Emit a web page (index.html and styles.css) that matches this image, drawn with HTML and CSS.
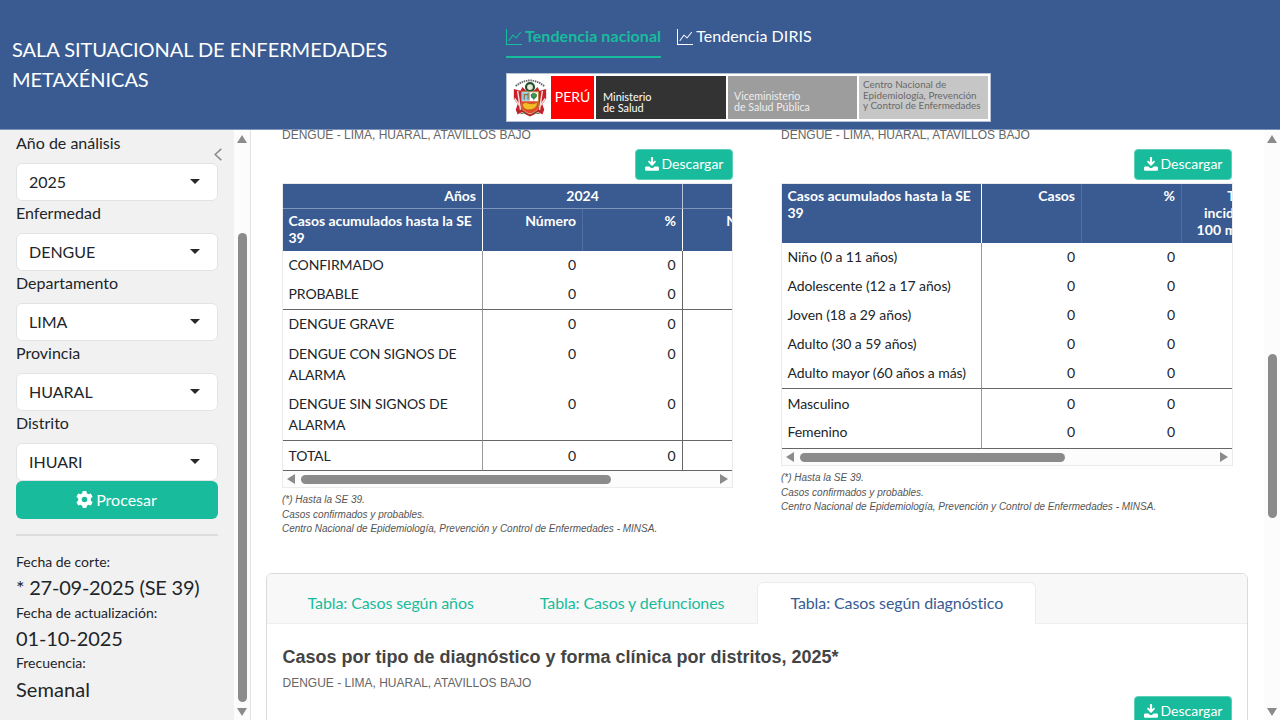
FILE: index.html
```html
<!DOCTYPE html>
<html lang="es">
<head>
<meta charset="utf-8">
<title>Sala situacional de enfermedades metaxénicas</title>
<link rel="stylesheet" href="styles.css">
</head>
<body>
<svg class="defs" width="0" height="0">
  <symbol id="graph" viewBox="0 0 16 16"><path fill-rule="evenodd" d="M0 0h1v15h15v1H0V0Zm14.817 3.113a.5.5 0 0 1 .07.704l-4.500 5.500a.5.5 0 0 1-.74.037L7.060 6.767l-3.656 5.027a.5.5 0 0 1-.808-.588l4-5.500a.5.5 0 0 1 .758-.06l2.609 2.610 4.150-5.073a.5.5 0 0 1 .704-.07Z"/></symbol>
  <symbol id="download" viewBox="0 0 512 512"><path d="M296 30c0-16-12-30-40-30s-40 14-40 30V190l-46-40c-14-12-34-12-46 0s-12 34 0 46l109 112c12 12 34 12 46 0l109-112c12-12 12-34 0-46s-32-12-46 0l-46 40V30zM50 350c-28 0-50 22-50 50v55c0 28 22 50 50 50H462c28 0 50-22 50-50v-55c0-28-22-50-50-50H352l-50 42c-25 22-67 22-92 0L160 350H50z"/></symbol>
</svg>
<header class="topbar">
  <h1 class="title">SALA SITUACIONAL DE ENFERMEDADES METAXÉNICAS</h1>
  <div class="topbar-right">
    <nav class="nav">
      <a class="nav-link active"><svg class="nav-icon"><use href="#graph"/></svg><span>Tendencia nacional</span></a>
      <a class="nav-link"><svg class="nav-icon"><use href="#graph"/></svg><span>Tendencia DIRIS</span></a>
    </nav>
    <div class="logo">
      <svg class="crest" viewBox="0 0 40 42">
        <path d="M5 9Q20-3 35 9" fill="none" stroke="#666" stroke-width="2" stroke-dasharray="1.600 .8"/>
        <path d="M3 12l7 2 2-4 5 5v22l-5-1-5 3-2-5 2-6-4-6z" fill="#c91f2c"/>
        <path d="M37 12l-7 2-2-4-5 5v22l5-1 5 3 2-5-2-6 4-6z" fill="#c91f2c"/>
        <path d="M7 14l3 20M33 14l-3 20M4 22l6 9M36 22l-6 9" stroke="#f3dfd8" stroke-width="1.500"/>
        <circle cx="20" cy="10" r="4.200" fill="#e6ecd9" stroke="#23502f" stroke-width="2.300"/>
        <path d="M11 15h18v14q0 8-9 10-9-2-9-10z" fill="#fff" stroke="#b58b37"/>
        <path d="M11.500 15.500h8.500v9h-8.500z" fill="#8ed0e4"/>
        <path d="M14 23v-5h3l1-1v6" stroke="#a06c42" stroke-width="1.300" fill="none"/>
        <path d="M21 18q3-3 6 0 0 4-3 4t-3-4M24 20v4" fill="#3b9b55" stroke="#397044" stroke-width=".8"/>
        <path d="M11 25h18v4q0 7-9 9-9-2-9-9z" fill="#e8462b"/>
        <path d="M12 28q3-3 6-1 5 2 10-1-1 8-9 8-6 0-7-6z" fill="#f4bd28" stroke="#9c6b1c" stroke-width=".6"/>
        <path d="M7 36q5-2 9 2l4 2 4-2q4-4 9-2" fill="none" stroke="#b52b2b" stroke-width="2"/>
        <path d="M10 38l6-1M30 38l-6-1" stroke="#426b43" stroke-width="1"/>
      </svg>
      <div class="logo-peru">PERÚ</div>
      <div class="logo-ministry">Ministerio<br>de Salud</div>
      <div class="logo-vice">Viceministerio<br>de Salud Pública</div>
      <div class="logo-cdc">Centro Nacional de<br>Epidemiología, Prevención<br>y Control de Enfermedades</div>
    </div>
  </div>
</header>
<div class="layout">
  <aside class="sidebar">
    <svg class="collapse" viewBox="0 0 10 16"><path d="M8.500 2L2 8l6.500 6"/></svg>
    <label class="label">Año de análisis</label><div class="select">2025<i class="caret"></i></div>
    <label class="label">Enfermedad</label><div class="select">DENGUE<i class="caret"></i></div>
    <label class="label">Departamento</label><div class="select">LIMA<i class="caret"></i></div>
    <label class="label">Provincia</label><div class="select">HUARAL<i class="caret"></i></div>
    <label class="label">Distrito</label><div class="select">IHUARI<i class="caret"></i></div>
    <button class="process"><svg class="gear" viewBox="0 0 16 16"><path fill-rule="evenodd" d="M6.300 0h3.400l.5 2.200 1.500.9 2.200-.7 1.700 3-1.700 1.600v2l1.700 1.600-1.700 3-2.200-.7-1.500.9-.5 2.200H6.300l-.5-2.200-1.500-.9-2.200.7-1.700-3L2.100 9V7L.4 5.400l1.700-3 2.200.7 1.500-.9zM8 5.400a2.600 2.600 0 1 0 0 5.200 2.600 2.600 0 0 0 0-5.200z"/></svg>Procesar</button>
    <hr class="rule">
    <div class="meta-label">Fecha de corte:</div><div class="meta-value digits">* 27-09-2025 (SE 39)</div>
    <div class="meta-label">Fecha de actualización:</div><div class="meta-value">01-10-2025</div>
    <div class="meta-label">Frecuencia:</div><div class="meta-value last">Semanal</div>
  </aside>
  <div class="vbar side-bar"><i class="up"></i><b class="thumb"></b><i class="down"></i></div>
  <main class="main">
    <div class="columns">
      <section class="panel">
        <div class="subtitle">DENGUE - LIMA, HUARAL, ATAVILLOS BAJO</div>
        <div class="actions"><button class="download"><svg class="dl-icon"><use href="#download"/></svg>Descargar</button></div>
        <div class="frame">
          <div class="clip">
          <table class="table by-year">
            <colgroup><col class="c-name"><col class="c-num"><col class="c-num"><col class="c-num"></colgroup>
            <thead>
              <tr class="years"><th class="stick">Años</th><th class="group" colspan="2">2024</th><th></th></tr>
              <tr class="heads"><th class="stick left">Casos acumulados hasta la SE 39</th><th class="thin">Número</th><th class="end">%</th><th>Número</th></tr>
            </thead>
            <tbody>
              <tr class="r29"><td class="stick">CONFIRMADO</td><td>0</td><td class="end">0</td><td></td></tr>
              <tr class="r30 line"><td class="stick">PROBABLE</td><td>0</td><td class="end">0</td><td></td></tr>
              <tr class="r30"><td class="stick">DENGUE GRAVE</td><td>0</td><td class="end">0</td><td></td></tr>
              <tr class="r50"><td class="stick">DENGUE CON SIGNOS DE ALARMA</td><td>0</td><td class="end">0</td><td></td></tr>
              <tr class="r51 line"><td class="stick">DENGUE SIN SIGNOS DE ALARMA</td><td>0</td><td class="end">0</td><td></td></tr>
              <tr class="r30 line total"><td class="stick">TOTAL</td><td>0</td><td class="end">0</td><td></td></tr>
            </tbody>
          </table>
          </div>
          <div class="hbar"><i class="prev"></i><b class="hthumb wide"></b><i class="next"></i></div>
        </div>
        <p class="notes">(*) Hasta la SE 39.<br>Casos confirmados y probables.<br>Centro Nacional de Epidemiología, Prevención y Control de Enfermedades - MINSA.</p>
      </section>
      <section class="panel">
        <div class="subtitle">DENGUE - LIMA, HUARAL, ATAVILLOS BAJO</div>
        <div class="actions"><button class="download"><svg class="dl-icon"><use href="#download"/></svg>Descargar</button></div>
        <div class="frame">
          <div class="clip">
          <table class="table by-group">
            <colgroup><col class="c-name"><col class="c-num"><col class="c-num"><col class="c-num"></colgroup>
            <thead>
              <tr class="heads tall"><th class="stick left">Casos acumulados hasta la SE 39</th><th class="thin">Casos</th><th class="thin">%</th><th class="rate">Tasa de <br>incidencia/ 100 mil hab.</th></tr>
            </thead>
            <tbody>
              <tr class="r29"><td class="stick">Niño (0 a 11 años)</td><td>0</td><td>0</td><td></td></tr>
              <tr class="r29"><td class="stick">Adolescente (12 a 17 años)</td><td>0</td><td>0</td><td></td></tr>
              <tr class="r29"><td class="stick">Joven (18 a 29 años)</td><td>0</td><td>0</td><td></td></tr>
              <tr class="r29"><td class="stick">Adulto (30 a 59 años)</td><td>0</td><td>0</td><td></td></tr>
              <tr class="r30 line"><td class="stick">Adulto mayor (60 años a más)</td><td>0</td><td>0</td><td></td></tr>
              <tr class="r29 low"><td class="stick">Masculino</td><td>0</td><td>0</td><td></td></tr>
              <tr class="r31 line"><td class="stick">Femenino</td><td>0</td><td>0</td><td></td></tr>
            </tbody>
          </table>
          </div>
          <div class="hbar"><i class="prev"></i><b class="hthumb narrow"></b><i class="next"></i></div>
        </div>
        <p class="notes">(*) Hasta la SE 39.<br>Casos confirmados y probables.<br>Centro Nacional de Epidemiología, Prevención y Control de Enfermedades - MINSA.</p>
      </section>
    </div>
    <section class="card">
      <nav class="tabs">
        <a class="tab">Tabla: Casos según años</a>
        <a class="tab">Tabla: Casos y defunciones</a>
        <a class="tab current">Tabla: Casos según diagnóstico</a>
      </nav>
      <div class="card-body">
        <h2 class="heading">Casos por tipo de diagnóstico y forma clínica por distritos, 2025*</h2>
        <div class="card-subtitle">DENGUE - LIMA, HUARAL, ATAVILLOS BAJO</div>
        <div class="actions"><button class="download"><svg class="dl-icon"><use href="#download"/></svg>Descargar</button></div>
      </div>
    </section>
  </main>
  <div class="vbar main-bar"><i class="up"></i><b class="thumb"></b><i class="down"></i></div>
</div>
</body>
</html>
```
FILE: styles.css
```css
* { box-sizing: border-box; }
body { margin: 0; height: 720px; overflow: hidden; display: flex; flex-direction: column; font: 16px/24px Lato, sans-serif; color: #212529; background: #fff; }
.defs { display: none; }
.topbar { height: 130px; flex: none; display: flex; background: #395b92; border-bottom: 1px solid #8093b8; color: #fff; }
.title { width: 506px; margin: 0; padding: 34px 100px 0 12px; font-size: 20px; line-height: 30px; font-weight: 400; letter-spacing: -.05px; }
.nav { height: 73px; display: flex; gap: 15px; letter-spacing: .07px; }
.nav-link { height: 58px; padding-top: 24px; display: flex; }
.nav-link.active { color: #18bc9c; font-weight: 700; border-bottom: 2px solid #18bc9c; }
.nav-icon { width: 16px; height: 16px; margin: 5px 3px 0 0; fill: currentColor; }
.nav-link + .nav-link { margin-left: 1px; }
.logo { width: 485px; height: 49px; display: flex; padding: 2px; border: 1px solid #b6c1d5; background: #fff; font-family: Lato, sans-serif; }
.crest { width: 38px; height: 43px; margin: 0 2px 0 2px; }
.logo-peru { width: 43px; margin-right: 2px; background: #f00; font-size: 14px; line-height: 42px; text-align: center; }
.logo-ministry { width: 130px; margin-right: 2px; padding: 15px 0 0 7px; background: #333; font-size: 10.900px; line-height: 11px; }
.logo-vice { width: 129px; margin-right: 2px; padding: 15px 0 0 6px; background: #9d9d9d; color: #eee; font-size: 10.600px; line-height: 11px; }
.logo-cdc { flex: 1; padding: 3px 0 0 4px; background: #c6c6c6; color: #696969; font-size: 9.900px; line-height: 10.700px; white-space: nowrap; }
.layout { flex: 1; min-height: 0; display: flex; }
.sidebar { position: relative; width: 234px; padding: 1px 16px 0 16px; background: #f1f1f1; }
.collapse { position: absolute; left: 213px; top: 17px; width: 10px; height: 15px; fill: none; stroke: #8b8b8b; stroke-width: 1.600; }
.label { display: block; height: 32px; }
.select { height: 38px; display: flex; align-items: center; justify-content: space-between; padding: 0 17px 1px 12px; border: 1px solid #e1e4e7; border-radius: 6px; background: #fff; }
.caret { border: 5px solid transparent; border-top-color: #282828; border-bottom: 0; margin-top: -1px; }
.process { width: 100%; height: 38px; display: flex; align-items: center; justify-content: center; gap: 3px; padding: 0 0 2px; border: 0; border-radius: 6px; background: #18bc9c; color: #fff; font: 16px Lato, sans-serif; }
.gear { width: 17px; height: 17px; fill: #fff; margin-left: -1px; }
.rule { height: 2px; margin: 15px 0; border: 0; background: #dcdcdc; }
.meta-label { height: 21px; font-size: 14px; line-height: 21px; }
.meta-value { height: 29.700px; font-size: 20px; line-height: 30px; letter-spacing: -.1px; }
.meta-value.digits { letter-spacing: -.22px; }
.meta-value.last { line-height: 32px; letter-spacing: .05px; }
.vbar { width: 16px; flex: none; display: flex; flex-direction: column; align-items: center; background: #fcfcfc; }
.side-bar { width: 17px; border-right: 1px solid #e2e2e2; }
.up, .down { border: 5px solid transparent; }
.up { margin-top: 5px; border-top: 0; border-bottom: 8px solid #8b8b8b; }
.down { margin-top: auto; margin-bottom: 4px; border-bottom: 0; border-top: 8px solid #8b8b8b; }
.thumb { width: 9px; border-radius: 5px; background: #8b8b8b; }
.side-bar .thumb { height: 469px; margin-top: 90px; }
.main-bar .thumb { height: 164px; margin-top: 211px; }
.main { width: 1013px; overflow: hidden; }
.columns { height: 443px; padding: 0 0 0 31px; display: flex; gap: 48px; }
.panel { width: 451px; }
.panel + .panel { width: 452px; }
.subtitle { height: 19px; font: 12px/24px "Liberation Sans", sans-serif; color: #666; margin-top: -7px; margin-bottom: 7px; }
.actions { display: flex; justify-content: flex-end; }
.panel + .panel .actions { padding-right: 1px; }
.download { width: 98px; height: 31px; padding: 0 0 2px; display: flex; align-items: center; justify-content: center; gap: 3px; border: 1px solid #5bcfb8; border-radius: 4px; background: #18bc9c; color: #fff; font: 14px Lato, sans-serif; }
.dl-icon { width: 14px; height: 14px; fill: #fff; }
.frame { margin-top: 3px; border: 1px solid #ebebeb; }
.clip { overflow: hidden; }
.table { width: 500px; table-layout: fixed; border-collapse: separate; border-spacing: 0; font-size: 14px; }
.c-name { width: 200px; }
.c-num { width: 100px; }
.table th { padding: 3px 6px 0; vertical-align: top; text-align: right; background: #395b92; color: #fff; font-weight: 700; line-height: 17px; }
.table .stick { border-right: 1px solid #999; padding-left: 5.500px; }
.table th.stick { border-right-color: #fff; }
.table th.left { letter-spacing: -.03px; }
.table .left, .table td.stick { text-align: left; }
.table .group { text-align: center; border-right: 1px solid #b6c1d5; }
.table .thin { border-right: 1px solid #506e9f; }
.table .end { border-right: 1px solid #666; }
.table th.end { border-right-color: #fff; }
.table th.rate { padding-right: 8px; }
.by-group .rate { letter-spacing: .1px; }
.years { height: 25px; }
.years th { border-bottom: 1px solid #8093b8; }
.heads { height: 42px; }
.heads.tall { height: 59px; }
.table td { padding: 4px 7px 0; vertical-align: top; text-align: right; line-height: 20.500px; }
.table td.end { padding-right: 6.500px; }
.table td.stick { letter-spacing: -.09px; }
.line td { border-bottom: 1px solid #666; }
.r29 { height: 29px; } .r30 { height: 30px; } .r31 { height: 31px; } .r50 { height: 50px; } .r51 { height: 51px; }
.table .total td, .table .low td { padding-top: 5px; }
.hbar { height: 16px; display: flex; align-items: center; background: #fcfcfc; }
.prev, .next { border: 5px solid transparent; }
.prev { margin-left: 4px; border-left: 0; border-right: 8px solid #8b8b8b; }
.next { margin: 0 4px 0 auto; border-right: 0; border-left: 8px solid #8b8b8b; }
.hthumb { height: 9px; margin-left: 6px; border-radius: 5px; background: #8b8b8b; }
.wide { width: 310px; }
.narrow { width: 265px; }
.notes { margin: 5px 0 0; font: italic 10px/14.600px "Liberation Sans", sans-serif; color: #555; white-space: nowrap; }
.card { width: 982px; height: 300px; margin-left: 15px; border: 1px solid #dadada; border-radius: 6px; overflow: hidden; }
.tabs { height: 50px; padding: 8px 8px 0 7.500px; display: flex; background: #f8f8f8; border-bottom: 1px solid #efefef; letter-spacing: -.1px; }
.tab { height: 42px; padding: 8px 32px 0; border: 1px solid transparent; border-bottom: 0; color: #18bc9c; }
.current { background: #fff; border-color: #ececec; border-radius: 6px 6px 0 0; color: #395b92; }
.card-body { padding: 21px 15px 0 15.500px; }
.heading { margin: 0; font: 700 18px/24px "Liberation Sans", sans-serif; color: #444; }
.card-subtitle { height: 27px; font: 12px/28px "Liberation Sans", sans-serif; color: #666; }
```
